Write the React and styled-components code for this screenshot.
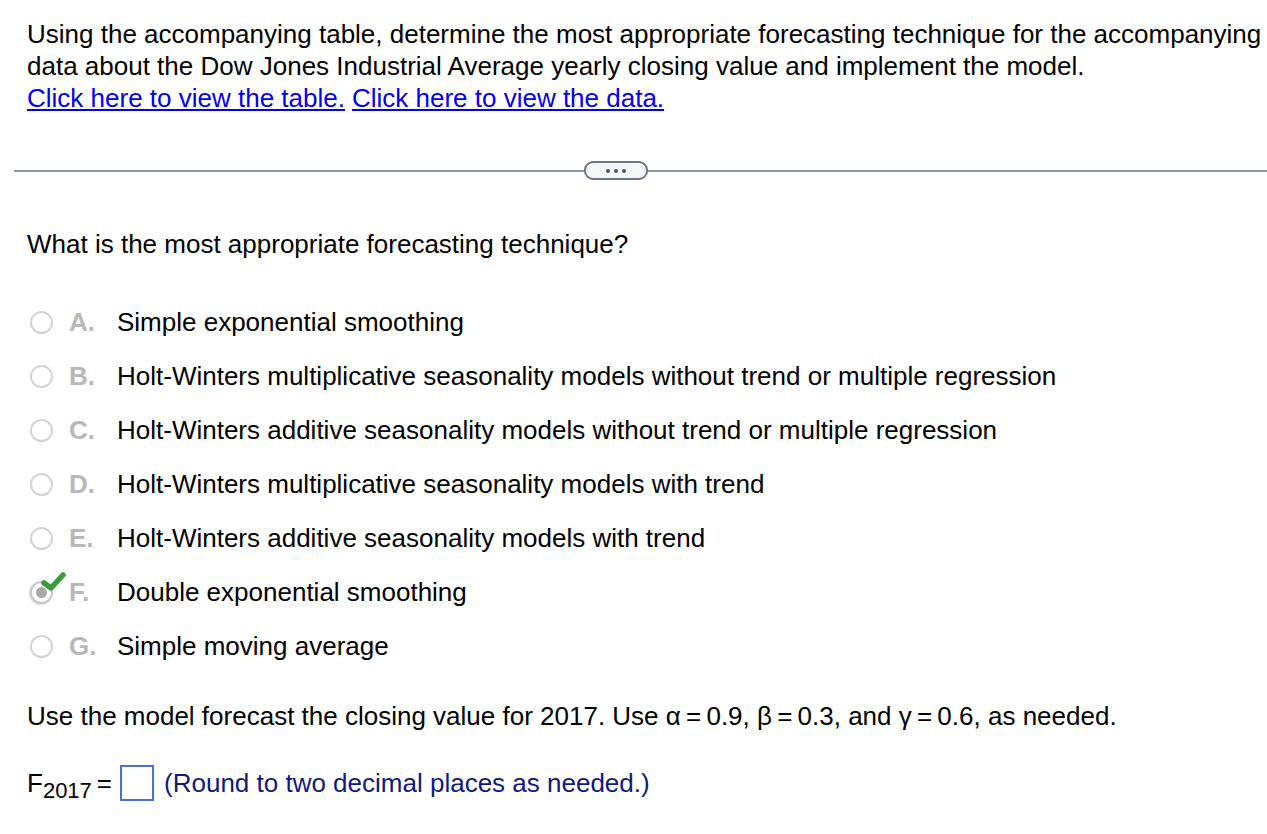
import React from "react"
import styled, { createGlobalStyle } from "styled-components"

const Global = createGlobalStyle`
  body {
    margin: 0;
    background: #fff;
    font-family: "Liberation Sans", Arial, sans-serif;
    color: #000;
  }
`;

const Page = styled.div`
  padding: 18px 0 0 0;
  font-size: 26px;
  line-height: 32px;
`;

const Intro = styled.div`
  padding: 0 0 0 27px;
  white-space: nowrap;
`;

const Link = styled.a`
  color: #0000ee;
  text-decoration: underline;
  cursor: pointer;
  margin-right: 7px;
`;

const Divider = styled.div`
  position: relative;
  margin: 56px 0 0 14px;
  height: 2px;
  background: #8a94a3;
`;

const MoreButton = styled.div`
  position: absolute;
  left: 570px;
  top: -9px;
  width: 60px;
  height: 15px;
  border: 2px solid #6b7686;
  border-radius: 9px;
  background: #f4f5f7;
  display: flex;
  align-items: center;
  justify-content: center;
  gap: 4px;

  span {
    width: 4px;
    height: 4px;
    border-radius: 50%;
    background: #4a5563;
  }
`;

const Question = styled.div`
  padding: 0 0 0 27px;
  margin-top: 56px;
`;

const Options = styled.div`
  margin-top: 46px;
  padding-left: 30px;
  display: flex;
  flex-direction: column;
  gap: 22px;
`;

const Option = styled.div`
  display: flex;
  align-items: center;
  height: 32px;
`;

const Radio = styled.div`
  position: relative;
  width: 23px;
  height: 23px;
  border-radius: 50%;
  border: 2px solid #d4d4d4;
  box-sizing: border-box;
  background: #fff;
  flex: none;
  ${p => p.checked && `
    border-color: #c8c8c8;
    box-shadow: -1px 1px 2px rgba(0,0,0,0.15);
    &::after {
      content: "";
      position: absolute;
      left: 4px;
      top: 4px;
      width: 11px;
      height: 11px;
      border-radius: 50%;
      background: #a9a9a9;
    }
  `}
`;

const Check = styled.svg`
  position: absolute;
  left: 9px;
  top: -12px;
  z-index: 1;
`;

const Letter = styled.span`
  width: 48px;
  margin-left: 16px;
  font-weight: bold;
  color: #b8b8b8;
`;

const Paragraph = styled.div`
  padding: 0 0 0 27px;
  margin-top: 38px;
`;

const AnswerRow = styled.div`
  padding: 0 0 0 27px;
  margin-top: 33px;
  display: flex;
  align-items: center;
`;

const Sub = styled.sub`
  font-size: 22px;
  vertical-align: -6px;
  line-height: 0;
  margin-right: 5px;
`;

const Box = styled.span`
  display: inline-block;
  width: 30px;
  height: 32px;
  border: 2px solid #4a72cc;
  margin: 0 10px 0 8px;
`;

const Hint = styled.span`
  color: #0d1a80;
`;

const options = [
  ["A.", "Simple exponential smoothing"],
  ["B.", "Holt-Winters multiplicative seasonality models without trend or multiple regression"],
  ["C.", "Holt-Winters additive seasonality models without trend or multiple regression"],
  ["D.", "Holt-Winters multiplicative seasonality models with trend"],
  ["E.", "Holt-Winters additive seasonality models with trend"],
  ["F.", "Double exponential smoothing", true],
  ["G.", "Simple moving average"],
];

export default function App() {
  return (
    <Page>
      <Global />
      <Intro>
        Using the accompanying table, determine the most appropriate forecasting technique for the accompanying
        <br />
        data about the Dow Jones Industrial Average yearly closing value and implement the model.
        <br />
        <Link>Click here to view the table.</Link>
        <Link>Click here to view the data.</Link>
      </Intro>
      <Divider>
        <MoreButton><span /><span /><span /></MoreButton>
      </Divider>
      <Question>What is the most appropriate forecasting technique?</Question>
      <Options>
        {options.map(([l, t, sel]) => (
          <Option key={l}>
            <Radio checked={sel}>
              {sel && (
                <Check width="26" height="22" viewBox="0 0 26 22">
                  <path d="M3 12 L10 17 L22 4" fill="none" stroke="#3a9a3c" strokeWidth="5.5" strokeLinecap="round" strokeLinejoin="round" />
                </Check>
              )}
            </Radio>
            <Letter>{l}</Letter>
            <span>{t}</span>
          </Option>
        ))}
      </Options>
      <Paragraph>
        Use the model forecast the closing value for 2017. Use α{"\u2009=\u2009"}0.9, β{"\u2009=\u2009"}0.3, and γ{"\u2009=\u2009"}0.6, as needed.
      </Paragraph>
      <AnswerRow>
        <span>F<Sub>2017</Sub>=</span>
        <Box />
        <Hint>(Round to two decimal places as needed.)</Hint>
      </AnswerRow>
    </Page>
  )
}
